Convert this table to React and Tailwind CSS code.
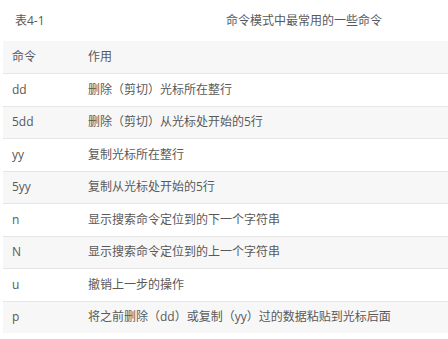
export default function App() {
  const rows = [
    ["dd", "删除（剪切）光标所在整行"],
    ["5dd", "删除（剪切）从光标处开始的5行"],
    ["yy", "复制光标所在整行"],
    ["5yy", "复制从光标处开始的5行"],
    ["n", "显示搜索命令定位到的下一个字符串"],
    ["N", "显示搜索命令定位到的上一个字符串"],
    ["u", "撤销上一步的操作"],
    ["p", "将之前删除（dd）或复制（yy）过的数据粘贴到光标后面"],
  ];
  const font = { fontFamily: '"Open Sans", "Noto Sans CJK SC", sans-serif' };
  return (
    <div className="w-[448px] h-[339px] bg-white text-[12px] text-[#595959]" style={font}>
      <div className="flex h-[41px] items-center">
        <span className="pl-[15px] w-[226px]">表4-1</span>
        <span>命令模式中最常用的一些命令</span>
      </div>
      <div className="ml-[3px]">
        <div className="flex h-[32px] items-center bg-[#f7f7f7]">
          <span className="pl-[9px] w-[85px]">命令</span>
          <span>作用</span>
        </div>
        {rows.map(([c, d], i) => (
          <div
            key={c}
            className={`flex h-[32.5px] box-border items-center border-t border-[#e6e6e6] ${i % 2 === 1 ? "bg-[#f7f7f7]" : "bg-white"}`}
          >
            <span className="pl-[9px] w-[85px]">{c}</span>
            <span>{d}</span>
          </div>
        ))}
      </div>
    </div>
  );
}
